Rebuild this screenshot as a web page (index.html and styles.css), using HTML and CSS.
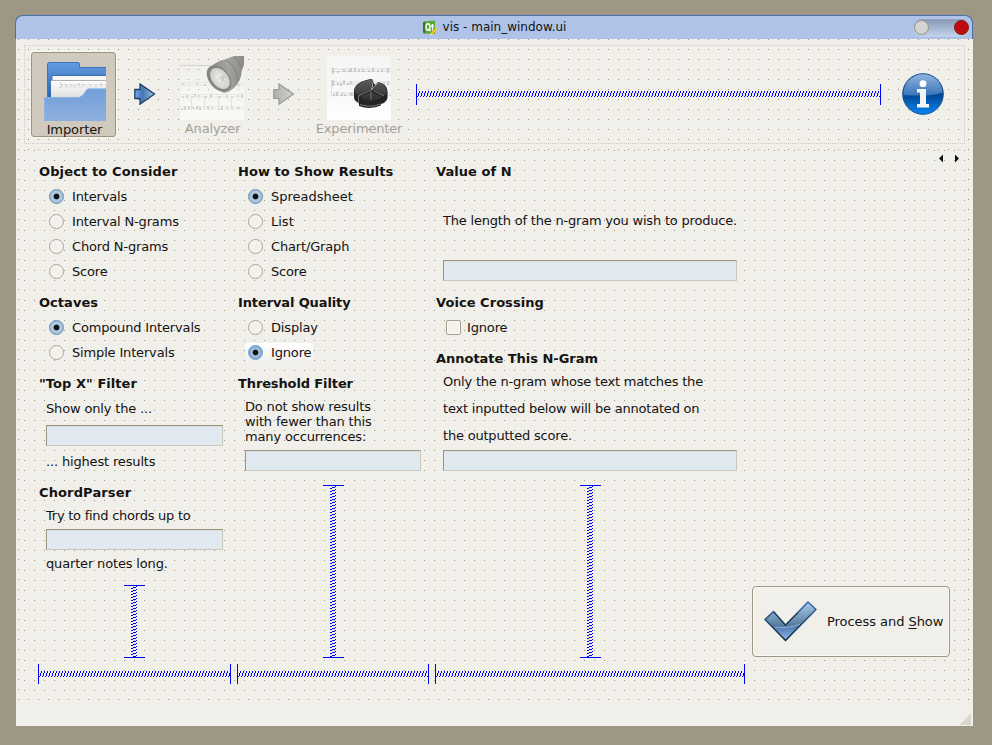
FILE: index.html
```html
<!DOCTYPE html>
<html lang="en">
<head>
<meta charset="utf-8">
<title>vis - main_window.ui</title>
<link rel="stylesheet" href="styles.css">
</head>
<body>
<div class="window">
  <header class="titlebar">
    <svg class="qt" width="16" height="16" viewBox="0 0 16 16">
      <path d="M2 1.500 13 .5V14L2 13.500Q1 13.500 1 12V3Q1 1.500 2 1.500Z" fill="#58a832"/>
      <path d="M1 2.500 3 1.500V13.500L1 12Z" fill="#36791d"/>
      <ellipse cx="6" cy="7" rx="2" ry="3.300" fill="none" stroke="#fff" stroke-width="1.400"/>
      <path d="M6.500 9l2 2M10.500 4v6.500M9 6h3" stroke="#fff" stroke-width="1.300" fill="none"/>
      <path d="M9 14.500 14.500 8.500" stroke="#f6c51d" stroke-width="2.400"/>
      <path d="M8 15.500l2-.6-1.300-1.500z" fill="#eee"/>
    </svg>
    <span>vis - main_window.ui</span>
    <div class="controls"><i class="min"></i><i class="close"></i></div>
  </header>
  <div class="content">
    <div class="toolbar">
      <button class="tool active">
        <svg width="62" height="59" viewBox="0 0 62 59">
          <defs>
            <linearGradient id="back" x2="0" y2="1"><stop offset="0" stop-color="#639de0"/><stop offset="1" stop-color="#2c62ad"/></linearGradient>
            <linearGradient id="front" x2="0" y2="1"><stop offset="0" stop-color="#719fd8"/><stop offset="1" stop-color="#8db0df"/></linearGradient>
            <linearGradient id="paper" x2="0" y2="1"><stop offset="0" stop-color="#fff"/><stop offset="1" stop-color="#dedede"/></linearGradient>
          </defs>
          <path d="M3 36V3Q3 0 6 0H34Q36 0 36 3V5H62V36Z" fill="url(#back)"/>
          <path d="M3.500 35V3Q3.500.5 6 .5H34Q35.500.5 35.500 3V5.500H62" fill="none" stroke="#3b74bb"/>
          <path d="M8 13H62V18H8Z" fill="#3d6cae"/>
          <path d="M8.500 14H62V18H8.500Z" fill="#f6f6f6"/>
          <path d="M7 18H62V36H7Z" fill="url(#paper)"/>
          <path d="M7 18.500H62" stroke="#b0b0b4"/>
          <path d="M15 22.500H62M15 25H62" stroke="#e0e0e0" stroke-width=".7"/>
          <path d="M16 20l2 3-2 3M22 25v-3M27 24v-2M31 25v-2M35 24v-3M39 24v-2M45 23h2M52 25v-2M57 24v-3" stroke="#bfbfbf" fill="none" stroke-width=".9"/>
          <path d="M0 37Q0 35 2 35H35Q39 34 41 30T45 26.500H62V59H0Z" fill="url(#front)"/>
          <path d="M.5 59V37Q.5 35.500 2 35.500H35Q39 34 41 30T45 27H62" fill="none" stroke="#91b8e8" stroke-width=".8"/>
        </svg>
        <span>Importer</span>
      </button>
      <svg class="arrow one" width="22" height="22" viewBox="0 0 22 22">
        <defs><linearGradient id="arr"><stop offset="0" stop-color="#70a7ea"/><stop offset=".4" stop-color="#4775b4"/><stop offset="1" stop-color="#9fc6e1"/></linearGradient></defs>
        <path d="M.8 6.500H6V.9L20.500 11 6 21.200V15.500H.8Z" fill="url(#arr)" stroke="#1d4063" stroke-width="1.300"/>
      </svg>
      <button class="tool analyzer" disabled>
        <svg width="64" height="64" viewBox="0 0 64 64">
          <defs>
            <linearGradient id="sheet" x2="0" y2="1"><stop offset="0" stop-color="#fff" stop-opacity="0"/><stop offset="1" stop-color="#fbfaf7" stop-opacity=".9"/></linearGradient>
            <linearGradient id="torch"><stop offset="0" stop-color="#858481"/><stop offset=".55" stop-color="#a5a4a0"/><stop offset="1" stop-color="#8b8a87"/></linearGradient>
            <radialGradient id="lens"><stop offset="0" stop-color="#f0f0ed"/><stop offset="1" stop-color="#cfcecb"/></radialGradient>
          </defs>
          <path d="M0 9H64V64H0Z" fill="url(#sheet)"/>
          <path d="M0 9.500H36" stroke="#d4d3cf"/>
          <path d="M0 26.500H64M0 29H64M0 38.500H64M0 41H64M0 50.500H64M0 53H64" stroke="#e6e5e1" stroke-width=".8"/>
          <path d="M2 28h2M9 29h1M16 28h2M24 29h2M48 28h2M57 29h3M2 41h2M7 39v3M12 41h1M15 38v3M18 40h2M25 41h2M31 38v4M39 41h2M47 39v3M51 41h2M57 40h2M62 38v4M1 53h2M5 50v4M9 53v-3M12 52h2M16 53l2-3M20 51v3M28 53v-3M31 52h2M38 53h2M42 50v4M47 53v-2M51 52h2M57 52h3" fill="none" stroke="#bfbeba" stroke-width="1.200"/>
          <path d="M11.500 40V54M24.500 40V54M38.500 40V54M51.500 40V54" stroke="#dad9d5" stroke-width=".8"/>
          <path d="M28 17Q33 5 46 3L54 0H64V9Q61 14 61 20Q59 29 50 35Q45 38 42 36Z" fill="url(#torch)"/>
          <path d="M54 1Q60 5 62 13M46 4Q57 10 58 25" fill="none" stroke="#82817e"/>
          <ellipse cx="39" cy="22.500" rx="10" ry="15" transform="rotate(-40 39 22.500)" fill="#858481"/>
          <ellipse cx="40" cy="22.500" rx="8" ry="12" transform="rotate(-40 40 22.500)" fill="url(#lens)"/>
          <path d="M38 23l7-3-4 7M40 20l5 6M43 19l-1 6" stroke="#c8c7c3" fill="none"/>
        </svg>
        <span>Analyzer</span>
      </button>
      <svg class="arrow two" width="22" height="22" viewBox="0 0 22 22">
        <defs><linearGradient id="garr"><stop offset="0" stop-color="#afafac"/><stop offset="1" stop-color="#d2d2ce"/></linearGradient></defs>
        <path d="M.8 6.500H6V.9L20.500 11 6 21.200V15.500H.8Z" fill="url(#garr)" stroke="#999996" stroke-width="1.200"/>
      </svg>
      <button class="tool experimenter" disabled>
        <svg width="64" height="64" viewBox="0 0 64 64">
          <defs>
            <linearGradient id="white" x2="0" y2="1"><stop offset="0" stop-color="#f5f5f3"/><stop offset=".6" stop-color="#f8f8f8"/><stop offset="1" stop-color="#fff"/></linearGradient>
            <linearGradient id="pie" x2="0" y2="1"><stop offset="0" stop-color="#5e5e5e"/><stop offset="1" stop-color="#2d2d2d"/></linearGradient>
          </defs>
          <path d="M0 0H64V64H0Z" fill="url(#white)"/>
          <path d="M4 13H64M4 15.500H64M4 26H64M4 28.500H64M4 37H64M4 39.500H64M4.500 24V41" stroke="#d8d8d8" stroke-width=".8"/>
          <path d="M6 12v6M10 16h2M17 13v3M21 15h2M24 12v4M28 12v4M32 16v-3M36 13v3M41 15h2M46 12v4M50 15h2M55 13v3M61 12v5M6 24v6M10 28h2M14 27v3M17 28v-4M20 28h2M24 28v-3M57 26v3M61 25v4M6 39h2M10 36v4M14 40l2-3M18 38v2M22 38h2M25 36v4" stroke="#adadad" fill="none"/>
          <path d="M27 34Q29 25 45 23L48 29 51 26Q60 28 60.500 35V42Q59 47 54 48V49.500Q43 54 32 50V47Q27 45 27 41Z" fill="#242424"/>
          <path d="M27.500 34Q30 25 45.500 23.500L44 33 31.500 40Q28 38 27.500 34ZM46.500 33.500l5-7Q60 29 60 36L57 40ZM44 36l11 5Q43 49 33 41Z" fill="url(#pie)"/>
          <path d="M31.500 40 44 34M46 34.500l11 5.500M44 35v9M31.500 40v8M33 48.500Q43 52 54 48" stroke="#929292" stroke-width=".7" fill="none"/>
          <path d="M46.500 24 44.500 34 51 26.500" fill="none" stroke="#d9d9d9" stroke-width=".8"/>
        </svg>
        <span>Experimenter</span>
      </button>
      <div class="hspacer"></div>
      <svg class="info" width="42" height="42" viewBox="0 0 42 42">
        <defs>
          <linearGradient id="orb" x2="0" y2="1"><stop offset="0" stop-color="#155093"/><stop offset=".55" stop-color="#004a98"/><stop offset="1" stop-color="#0a86f5"/></linearGradient>
          <linearGradient id="gloss" x2="0" y2="1"><stop offset="0" stop-color="#8fb4df"/><stop offset="1" stop-color="#3974b8"/></linearGradient>
        </defs>
        <circle cx="21" cy="21" r="20.300" fill="url(#orb)" stroke="#174f8e"/>
        <path d="M1.500 22A19.500 19.500 0 1 1 40.500 19.500Q30 24 1.500 22Z" fill="url(#gloss)"/>
        <circle cx="21" cy="10.700" r="3.400" fill="#fff"/>
        <path d="M15 16H24V31H27V34.500H15V31H18V19.500H15Z" fill="#f4f4f4"/>
      </svg>
    </div>
    <main class="form">
      <section class="column first">
        <h2 class="spread">Object to Consider</h2>
        <label class="option"><i class="radio on"></i>Intervals</label>
        <label class="option"><i class="radio"></i>Interval N-grams</label>
        <label class="option"><i class="radio"></i>Chord N-grams</label>
        <label class="option"><i class="radio"></i>Score</label>
        <h2 class="next">Octaves</h2>
        <label class="option"><i class="radio on"></i>Compound Intervals</label>
        <label class="option"><i class="radio"></i>Simple Intervals</label>
        <h2 class="next">"Top X" Filter</h2>
        <p>Show only the ...</p>
        <div class="field after-text"></div>
        <p class="after-field">... highest results</p>
        <h2 class="next spread">ChordParser</h2>
        <p class="tight">Try to find chords up to</p>
        <div class="field close-field"></div>
        <p class="close-text">quarter notes long.</p>
        <div class="vspacer"></div>
        <div class="hspacer"></div>
      </section>
      <section class="column second">
        <h2>How to Show Results</h2>
        <label class="option natural"><i class="radio on"></i>Spreadsheet</label>
        <label class="option natural"><i class="radio"></i>List</label>
        <label class="option"><i class="radio"></i>Chart/Graph</label>
        <label class="option"><i class="radio"></i>Score</label>
        <h2 class="next narrow">Interval Quality</h2>
        <label class="option"><i class="radio"></i>Display</label>
        <label class="option hover"><i class="radio on"></i>Ignore</label>
        <h2 class="next narrow">Threshold Filter</h2>
        <p class="compact">Do not show results<br>with fewer than this<br>many occurrences:</p>
        <div class="field wide-gap"></div>
        <div class="vspacer"></div>
        <div class="hspacer"></div>
      </section>
      <section class="column third">
        <h2>Value of N</h2>
        <p class="length">The length of the n-gram you wish to produce.</p>
        <div class="field n-field"></div>
        <h2 class="voice">Voice Crossing</h2>
        <label class="option check"><i class="box"></i>Ignore</label>
        <h2 class="next flat">Annotate This N-Gram</h2>
        <p class="loose">Only the n-gram whose text matches the<br>text inputted below will be annotated on<br>the outputted score.</p>
        <div class="field note-field"></div>
        <div class="vspacer"></div>
        <div class="hspacer"></div>
      </section>
      <section class="column actions">
        <div class="pager">
          <svg width="20" height="9" viewBox="0 0 20 9"><path d="M0 4.500 4 .5V8.500ZM20 4.500 16 .5V8.500Z" fill="#111"/></svg>
        </div>
        <button class="process">
          <svg width="53" height="41" viewBox="0 0 53 41">
            <defs><linearGradient id="tick" x2="0" y2="1"><stop offset="0" stop-color="#a9cde8"/><stop offset=".62" stop-color="#547a9e"/><stop offset=".64" stop-color="#5078b0"/><stop offset="1" stop-color="#8eb8f2"/></linearGradient>
            <linearGradient id="edge" x2="0" y2="1"><stop offset="0" stop-color="#3769ac"/><stop offset="1" stop-color="#102c32"/></linearGradient></defs>
            <path d="M1 18.500 9.500 10.500 21.500 24 44 1 52 8.500 21.500 39.500Z" fill="url(#tick)" stroke="url(#edge)" stroke-width="1.500" stroke-linejoin="round"/>
            <path d="M9.500 11 21.500 24.500 34 12" fill="none" stroke="#1d3440" stroke-width="1"/>
            <path d="M11 26Q25 28 36 23" fill="none" stroke="#a2bedb" stroke-width=".8"/>
          </svg>
          <span>Process and <u>S</u>how</span>
        </button>
      </section>
    </main>
    <footer class="status"><i class="grip"></i></footer>
  </div>
</div>
</body>
</html>
```

FILE: styles.css
```css
* { box-sizing: border-box; }

body {
  margin: 0;
  height: 745px;
  padding: 15px 19px 0 15px;
  overflow: hidden;
  background: #9e9784;
  color: #141312;
  font: 13px/25px "DejaVu Sans", sans-serif;
}

.window { width: 958px; height: 711px; }

.titlebar {
  position: relative;
  height: 24px;
  display: flex;
  justify-content: center;
  gap: 5px;
  align-items: center;
  background: #aec3e7;
  border: 1px solid #4872aa;
  border-bottom: 0;
  border-radius: 8px 8px 0 0;
  font-size: 12px;
  line-height: 22px;
}
.titlebar span { padding-bottom: 2px; }

.controls {
  position: absolute;
  right: 2px;
  top: 2px;
  width: 57px;
  height: 19px;
  padding: 0 1px;
  display: flex;
  justify-content: space-between;
  align-items: center;
  border-radius: 10px;
  background: linear-gradient(#8394b0, #c5d5ef);
  box-shadow: inset 0 0 1px 1px #bccced;
}
.controls i { width: 15px; height: 15px; border-radius: 50%; }
.min { background: #d6d4d0; border: 1px solid #918f8a; }
.close { background: #bd0c0c; border: 1px solid #7f1717; }

.content {
  margin-left: 1px;
  height: 687px;
  padding: 6px 6px 0 3px;
  background:
    linear-gradient(#f0efea, #f0efea) 0 661px / 100% 26px no-repeat,
    linear-gradient(90deg, transparent 1px, #f0efea 1px) 2px 0 / 10px 10px,
    linear-gradient(#9a9481 1px, #f0efea 1px) 0 0 / 10px 10px;
}

.toolbar {
  height: 99px;
  margin: 0 2px 0 5px;
  padding: 6px 20px 0 6px;
  display: flex;
  align-items: flex-start;
  border: 1px dotted #cdcbc4;
}

.tool {
  display: flex;
  flex-direction: column;
  align-items: center;
  flex: none;
  height: 85px;
  padding: 3px 0 0;
  border: 1px solid transparent;
  background: none;
  color: #a3a19b;
  font: inherit;
}
.tool svg { display: block; flex: none; }
.tool span { line-height: 18px; }
.tool.active {
  width: 85px;
  padding-top: 9px;
  border-color: #9d9480;
  border-radius: 3px;
  background: #cfcabd;
  box-shadow: 0 0 0 1px #f8f7f4;
  color: #141312;
  letter-spacing: -.1px;
}
.tool.active svg { margin-left: 2px; }
.tool.active span { padding-left: 2px; }
.analyzer { width: 64px; margin: 0 0 0 24px; }
.analyzer span { padding-left: 1px; letter-spacing: -.15px; }
.experimenter { width: 88px; margin-left: 20px; letter-spacing: -.17px; }
.arrow { flex: none; margin-top: 31px; }
.one { margin-left: 18px; }
.two { margin-left: 29px; }
.info { flex: none; margin: 21px 0 0 21px; }

.hspacer {
  height: 20px;
  border: solid #00f;
  border-width: 0 1px;
  background:
    linear-gradient(90deg, #00f 1px, transparent 1px) 0 12px / 3px 1px repeat-x,
    linear-gradient(90deg, transparent 1px, #00f 1px 2px, transparent 2px) 0 9px / 3px 3px repeat-x,
    linear-gradient(90deg, transparent 2px, #00f 2px) 0 7px / 3px 2px repeat-x;
}
.toolbar .hspacer { flex: 1; height: 21px; margin: 32px 0 0 13px; }

.vspacer {
  flex: 1;
  width: 21px;
  align-self: center;
  margin: 14px 0 6px;
  border: solid #00f;
  border-width: 1px 0;
  background:
    linear-gradient(transparent 2px, #00f 2px) 7px 0 / 2px 3px repeat-y,
    linear-gradient(transparent 1px, #00f 1px 2px, transparent 2px) 9px 0 / 3px 3px repeat-y,
    linear-gradient(#00f 1px, transparent 1px) 12px 0 / 1px 3px repeat-y;
}
.first .vspacer { margin-top: 9px; }

.form {
  display: grid;
  grid-template-columns: 193px 192px 310px 212px;
  column-gap: 6px;
  height: 544px;
  margin: 6px 0 0;
  padding: 9px 0 10px 19px;
  background:
    linear-gradient(90deg, transparent 1px, #f0efea 1px) 5px 0 / 10px 10px,
    linear-gradient(#9a9481 1px, #f0efea 1px) 0 0 / 10px 10px;
}

.column { display: flex; flex-direction: column; }

h2 {
  margin: 0 0 0 1px;
  height: 25px;
  font-size: 13px;
  line-height: 25px;
  font-weight: bold;
  letter-spacing: .05px;
  white-space: nowrap;
}
.spread { letter-spacing: .13px; }
.narrow { letter-spacing: -.12px; }
.flat { letter-spacing: -.03px; }
.next { margin-top: 6px; }
.voice { margin-top: 9px; }

p { margin: 0 0 0 8px; white-space: nowrap; letter-spacing: -.16px; }

.option { display: flex; align-items: center; height: 25px; padding-left: 11px; letter-spacing: -.16px; }
.natural { letter-spacing: 0; }
.hover {
  align-self: flex-start;
  height: 19px;
  margin: 3px 0 3px 8px;
  padding: 0 2px 0 3px;
  border-radius: 3px;
  background: linear-gradient(#fff, #f1efec);
}

.radio {
  width: 15px;
  height: 15px;
  margin-right: 8px;
  border: 1px solid #aaa494;
  border-radius: 50%;
  background: #f2f1ed;
  box-shadow: inset 0 0 0 1px #f8f7f4;
}
.radio.on {
  border-color: #6c8fae;
  background: radial-gradient(circle, #111 2.500px, #adc9e3 3.300px);
  box-shadow: inset 0 0 0 1px #9dbad5;
}
.hover .radio { border-color: #6e9bc6; box-shadow: inset 0 0 0 2px #7eabd5; }

.box {
  width: 15px;
  height: 15px;
  margin-right: 6px;
  border: 1px solid #a69f8c;
  border-radius: 2px;
  background: #f2f1ed;
  box-shadow: inset 0 0 0 1px #fbfaf8;
}

.field {
  flex: none;
  height: 21px;
  margin: 0 8px;
  border: 1px solid;
  border-color: #9d9480 #cbc7ba #cbc7ba #9d9480;
  background: #e1e9f0;
  box-shadow: inset 0 1px #d8dfe4;
}
.after-text { margin-top: 4px; }
.after-field { margin-top: 3px; }
.tight { margin-top: -2px; letter-spacing: -.25px; }
.close-field { margin-top: 1px; }
.close-text { margin-top: 1px; }
.compact { margin-top: 3px; line-height: 15px; }
.wide-gap { margin-top: 6px; }
.length { margin-top: 24px; letter-spacing: -.2px; }
.n-field { margin-top: 27px; }
.loose { margin-top: -3px; line-height: 27px; }
p.loose { letter-spacing: -.2px; }
.note-field { margin-top: 1px; }

.actions { justify-content: space-between; padding-left: 1px; }
.pager { height: 9px; margin: -5px 4px 0 0; text-align: right; line-height: 0; }
.process {
  display: flex;
  align-items: center;
  width: 198px;
  height: 71px;
  margin-bottom: 27px;
  padding: 0 0 0 11px;
  border: 1px solid #9d9783;
  border-radius: 4px;
  background: #f0efea;
  box-shadow: inset 0 0 0 1px #f9f8f5;
  color: inherit;
  font: inherit;
  letter-spacing: -.05px;
  white-space: nowrap;
}
.process svg { flex: none; margin-right: 10px; }
.process u { text-underline-offset: 2px; }

.status { display: flex; justify-content: flex-end; height: 32px; padding: 20px 0 0; margin-right: -4px; }
.grip { width: 11px; height: 11px; background: linear-gradient(135deg, transparent 50%, #dad6cc 50%); }
```
